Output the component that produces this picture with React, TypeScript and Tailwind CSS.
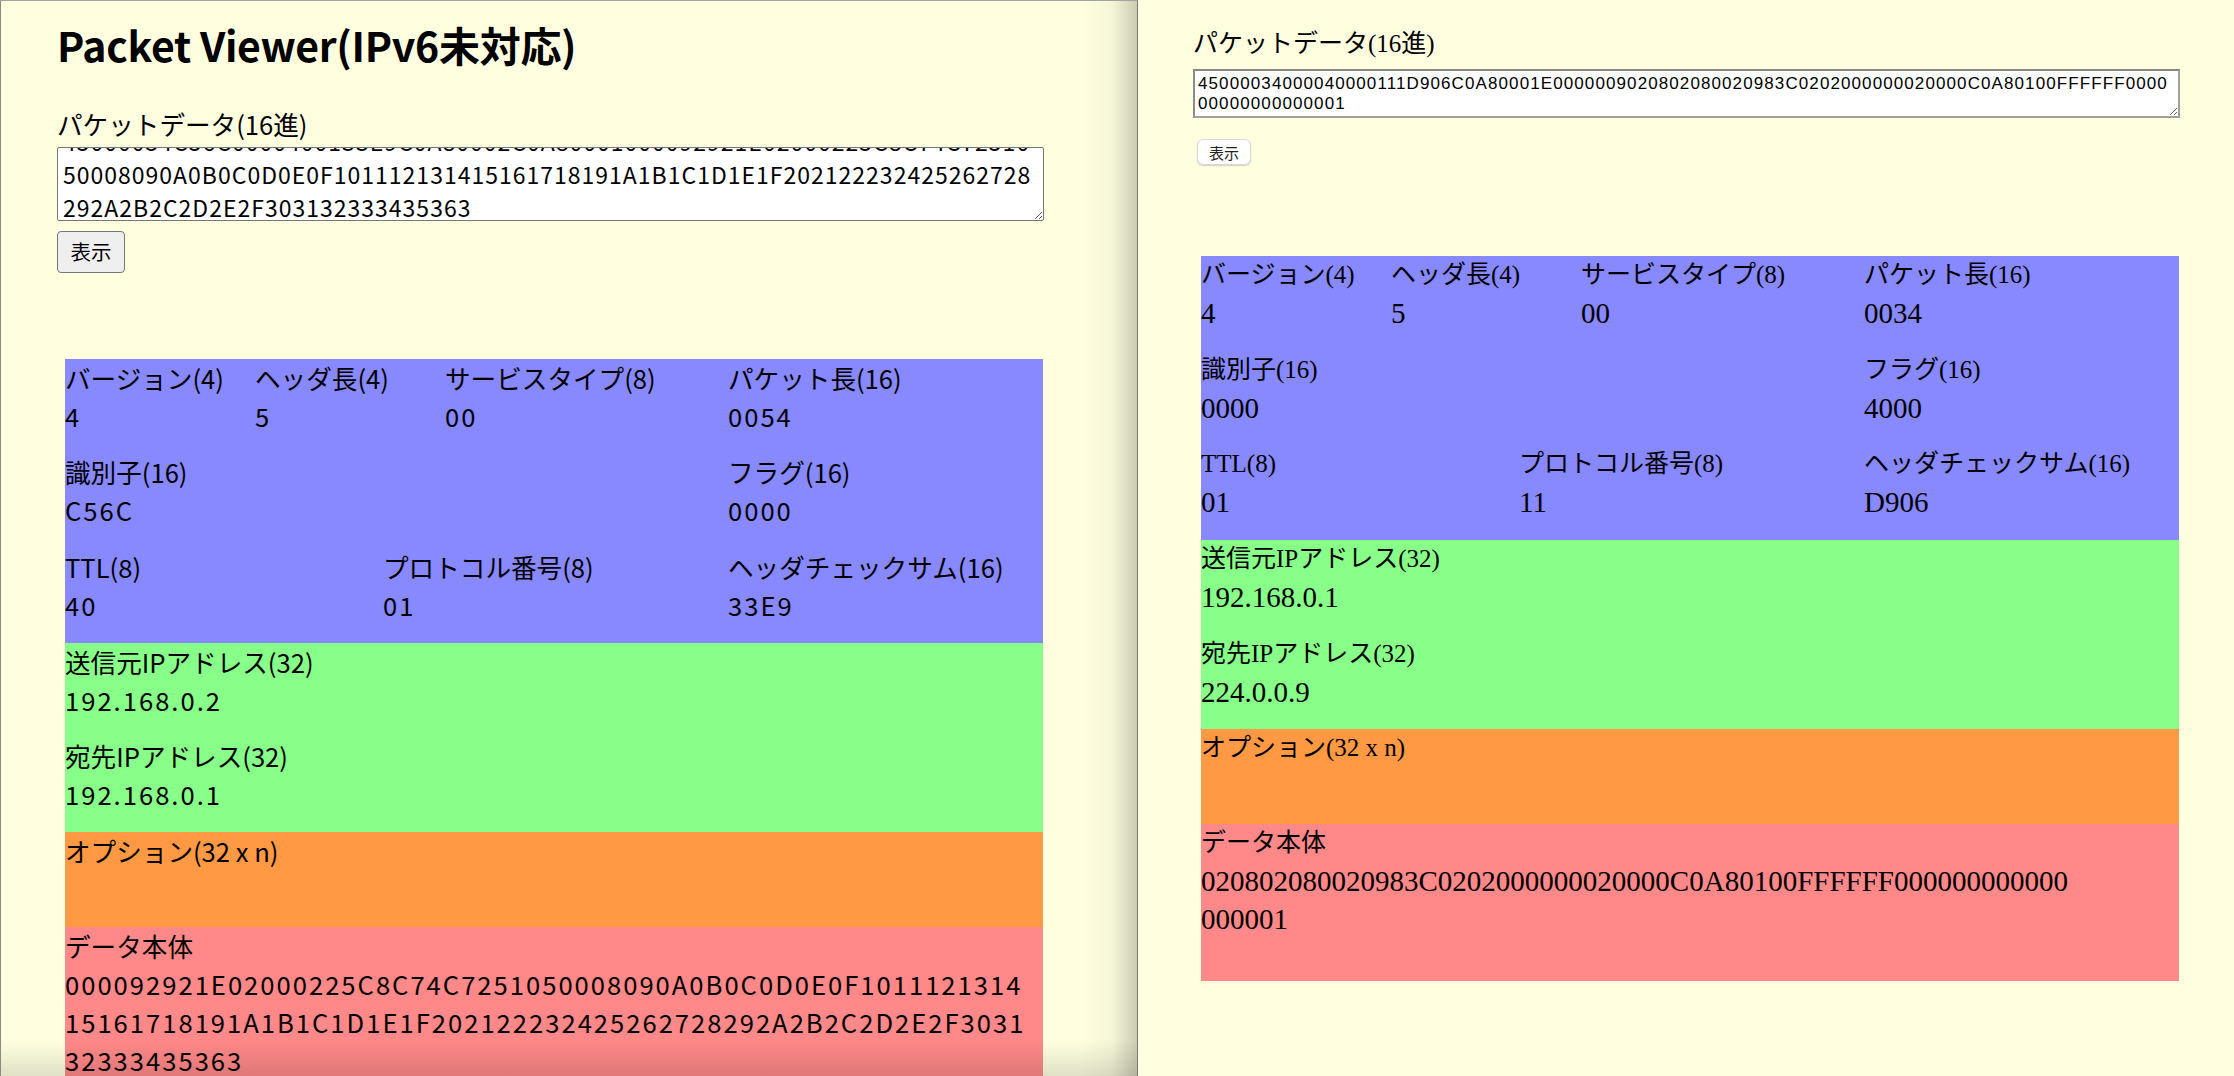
import React, { useLayoutEffect, useRef } from "react";

type Packet = {
  version: string;
  ihl: string;
  tos: string;
  len: string;
  id: string;
  flags: string;
  ttl: string;
  proto: string;
  sum: string;
  src: string;
  dst: string;
  data: string[];
};

const leftPacket: Packet = {
  version: "4",
  ihl: "5",
  tos: "00",
  len: "0054",
  id: "C56C",
  flags: "0000",
  ttl: "40",
  proto: "01",
  sum: "33E9",
  src: "192.168.0.2",
  dst: "192.168.0.1",
  data: [
    "000092921E02000225C8C74C7251050008090A0B0C0D0E0F1011121314",
    "15161718191A1B1C1D1E1F202122232425262728292A2B2C2D2E2F3031",
    "32333435363",
  ],
};

const rightPacket: Packet = {
  version: "4",
  ihl: "5",
  tos: "00",
  len: "0034",
  id: "0000",
  flags: "4000",
  ttl: "01",
  proto: "11",
  sum: "D906",
  src: "192.168.0.1",
  dst: "224.0.0.9",
  data: ["020802080020983C0202000000020000C0A80100FFFFFF000000000000", "000001"],
};

const leftHex =
  "45000054C56C0000400133E9C0A80002C0A80001000092921E02000225C8C74C72510\n" +
  "50008090A0B0C0D0E0F101112131415161718191A1B1C1D1E1F202122232425262728\n" +
  "292A2B2C2D2E2F303132333435363";

const rightHex =
  "45000034000040000111D906C0A80001E0000009020802080020983C0202000000020000C0A80100FFFFFF0000\n" +
  "00000000000001";

function Cell({
  label,
  value,
  labelCls,
  valueCls,
}: {
  label: string;
  value: string;
  labelCls: string;
  valueCls: string;
}) {
  return (
    <div>
      <div className={"h-[38px] leading-[38px] whitespace-nowrap " + labelCls}>{label}</div>
      <div className={"h-[38px] leading-[38px] whitespace-nowrap " + valueCls}>{value}</div>
    </div>
  );
}

function Blocks({ p, labelCls, valueCls }: { p: Packet; labelCls: string; valueCls: string }) {
  return (
    <div className="ml-[8px] w-[978px] text-black">
      <div className="bg-[#8888ff]">
        <div className="grid grid-cols-[190px_190px_283px_1fr] pb-[18.7px]">
          <Cell label="バージョン(4)" value={p.version} labelCls={labelCls} valueCls={valueCls} />
          <Cell label="ヘッダ長(4)" value={p.ihl} labelCls={labelCls} valueCls={valueCls} />
          <Cell label="サービスタイプ(8)" value={p.tos} labelCls={labelCls} valueCls={valueCls} />
          <Cell label="パケット長(16)" value={p.len} labelCls={labelCls} valueCls={valueCls} />
        </div>
        <div className="grid grid-cols-[663px_1fr] pb-[18.7px]">
          <Cell label="識別子(16)" value={p.id} labelCls={labelCls} valueCls={valueCls} />
          <Cell label="フラグ(16)" value={p.flags} labelCls={labelCls} valueCls={valueCls} />
        </div>
        <div className="grid grid-cols-[318px_345px_1fr] pb-[18.7px]">
          <Cell label="TTL(8)" value={p.ttl} labelCls={labelCls} valueCls={valueCls} />
          <Cell label="プロトコル番号(8)" value={p.proto} labelCls={labelCls} valueCls={valueCls} />
          <Cell label="ヘッダチェックサム(16)" value={p.sum} labelCls={labelCls} valueCls={valueCls} />
        </div>
      </div>
      <div className="bg-[#88ff88]">
        <div className="pb-[18.7px]">
          <Cell label="送信元IPアドレス(32)" value={p.src} labelCls={labelCls} valueCls={valueCls} />
        </div>
        <div className="pb-[18.7px]">
          <Cell label="宛先IPアドレス(32)" value={p.dst} labelCls={labelCls} valueCls={valueCls} />
        </div>
      </div>
      <div className="bg-[#ff9944] pb-[18.7px]">
        <div className={"h-[38px] leading-[38px] whitespace-nowrap " + labelCls}>オプション(32 x n)</div>
        <div className="h-[38px]"></div>
      </div>
      <div className="bg-[#ff8888] pb-[43px]">
        <div className={"h-[38px] leading-[38px] whitespace-nowrap " + labelCls}>データ本体</div>
        {p.data.map((d, i) => (
          <div key={i} className={"h-[38px] leading-[38px] whitespace-nowrap " + valueCls}>
            {d}
          </div>
        ))}
      </div>
    </div>
  );
}

export default function App() {
  const taRef = useRef<HTMLTextAreaElement>(null);
  useLayoutEffect(() => {
    if (taRef.current) taRef.current.scrollTop = 25;
  }, []);

  return (
    <div className="flex w-[2234px] h-[1076px] overflow-hidden bg-[#ffffe0]">
      {/* left window */}
      <div className="relative w-[1138px] h-full shrink-0 overflow-hidden bg-[#ffffe0] border-t border-l border-r border-t-[#a3a3a3] border-l-[#8a8a8a] border-r-[#7a7a7a] [font-family:'Noto_Sans_CJK_JP',sans-serif] text-black">
        <div className="pl-[56px] pt-[12.5px]">
          <h1 className="h-[60px] text-[41px] font-bold leading-[60px] tracking-[-0.3px] whitespace-nowrap">
            Packet Viewer(IPv6未対応)
          </h1>
          <div className="mt-[31px] h-[38px] text-[25.6px] leading-[38px] whitespace-nowrap">
            パケットデータ(16進)
          </div>
          <textarea
            ref={taRef}
            readOnly
            wrap="off"
            value={leftHex}
            className="mt-[4px] block h-[74px] w-[987px] resize-y overflow-hidden rounded-[2px] border border-[#767676] bg-white px-[5px] py-[2px] text-[23px] leading-[33.4px] tracking-[1px] text-black outline-none [font-family:'Noto_Sans_CJK_JP',sans-serif]"
          />
          <button className="mt-[10px] block h-[42px] w-[68px] rounded-[4px] border border-[#767676] bg-[#efefef] text-[20.5px] leading-none text-black">
            表示
          </button>
          <div className="mt-[86px]">
            <Blocks
              p={leftPacket}
              labelCls="text-[25.6px]"
              valueCls="text-[25.6px] tracking-[2px]"
            />
          </div>
        </div>
        <div className="pointer-events-none absolute right-0 top-0 bottom-0 w-[56px] bg-[linear-gradient(to_right,rgba(0,0,0,0)_0%,rgba(0,0,0,0.04)_55%,rgba(0,0,0,0.2)_100%)]" />
        <div className="pointer-events-none absolute left-0 right-0 bottom-0 h-[36px] bg-[linear-gradient(to_bottom,rgba(0,0,0,0),rgba(0,0,0,0.12))]" />
      </div>

      {/* right window */}
      <div className="flex-1 h-full overflow-hidden bg-[#ffffe0] text-black">
        <div className="pl-[55px] pt-[25px]">
          <div className="h-[38px] text-[25px] leading-[38px] whitespace-nowrap [font-family:'Liberation_Serif','Noto_Sans_CJK_JP',serif]">
            パケットデータ(16進)
          </div>
          <textarea
            readOnly
            wrap="off"
            value={rightHex}
            className="mt-[6px] block h-[49px] w-[987px] resize-y overflow-hidden border-2 border-[#a0a0a0] border-t-[#858585] border-l-[#8c8c8c] bg-white px-[3px] pt-[3px] pb-[2px] text-[17px] leading-[20px] tracking-[1.1px] text-black outline-none [font-family:'Liberation_Sans',sans-serif]"
          />
          <button className="mt-[21px] ml-[4px] block h-[26px] w-[54px] rounded-[6px] border border-[#d8d8d8] bg-white text-[15px] leading-none text-[#222] shadow-[0_1px_1.5px_rgba(0,0,0,0.18)] [font-family:'Noto_Sans_CJK_JP',sans-serif]">
            表示
          </button>
          <div className="mt-[91px]">
            <Blocks
              p={rightPacket}
              labelCls="text-[25px] [font-family:'Liberation_Serif','Noto_Sans_CJK_JP',serif]"
              valueCls="text-[29px] [font-family:'Liberation_Serif',serif]"
            />
          </div>
        </div>
      </div>
    </div>
  );
}
